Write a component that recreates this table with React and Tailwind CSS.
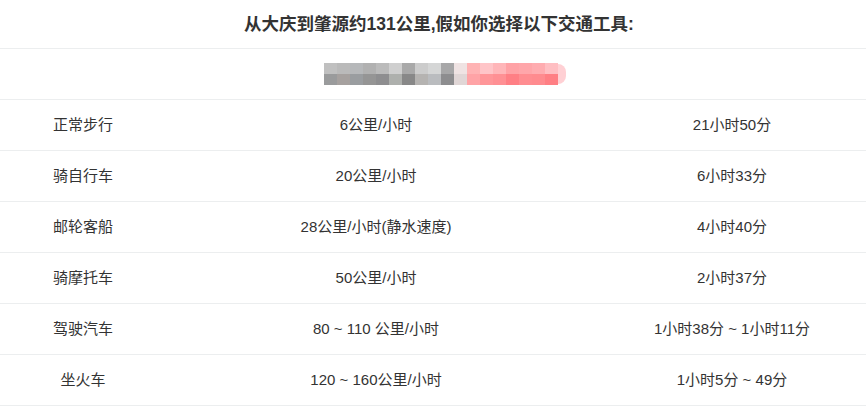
import React from "react";

const rows = [
  ["正常步行", "6公里/小时", "21小时50分"],
  ["骑自行车", "20公里/小时", "6小时33分"],
  ["邮轮客船", "28公里/小时(静水速度)", "4小时40分"],
  ["骑摩托车", "50公里/小时", "2小时37分"],
  ["驾驶汽车", "80 ~ 110 公里/小时", "1小时38分 ~ 1小时11分"],
  ["坐火车", "120 ~ 160公里/小时", "1小时5分 ~ 49分"],
];

const top = ["#c0c0c0", "#bababa", "#b6b8ba", "#b1b1b1", "#bbbbbb", "#cfcfcf", "#a9a9a9", "#cccccc", "#d5d6d6", "#a7a7a8", "#efe3e3", "#ffb3b4", "#ffc5c8", "#ffb6b9", "#ffa2a6", "#ffa6aa", "#ffacb0", "#ffbec2"];
const bottom = ["#9a9b9c", "#a6a19f", "#9a9da0", "#959595", "#8e8e90", "#aeb0ad", "#888888", "#b5b3b1", "#babcbf", "#8d8d8f", "#e0d6d6", "#ffa3a6", "#ff9699", "#ff9094", "#ff7f85", "#ff8d91", "#ff8b8f", "#ff7f84"];

export default function App() {
  return (
    <div className="w-full overflow-hidden bg-white text-[#333]" style={{ fontFamily: '"Liberation Sans", "Noto Sans CJK SC", sans-serif' }}>
      <div className="w-[878px]">
        <div className="h-[49px] flex items-center justify-center text-[17.5px] font-bold text-[#333] border-b border-[#eceeef]">
          从大庆到肇源约131公里,假如你选择以下交通工具:
        </div>
        <div className="h-[51px] flex items-center justify-center border-b border-[#eceeef]">
          <div className="flex items-center pl-[12px]">
            <div className="flex flex-col">
              <div className="flex">
                {top.map((c, i) => (
                  <div key={i} className="w-[13px] h-[11px]" style={{ background: c }} />
                ))}
              </div>
              <div className="flex">
                {bottom.map((c, i) => (
                  <div key={i} className="w-[13px] h-[11px]" style={{ background: c }} />
                ))}
              </div>
            </div>
            <div className="w-[8px] h-[20px] rounded-r-full bg-[#ffd0d4]" />
          </div>
        </div>
        {rows.map((r, i) => (
          <div key={i} className="grid grid-cols-[166px_420px_292px] h-[51px] items-center border-b border-[#eceeef] text-[15px]">
            <div className="text-center">{r[0]}</div>
            <div className="text-center">{r[1]}</div>
            <div className="text-center">{r[2]}</div>
          </div>
        ))}
      </div>
    </div>
  );
}
